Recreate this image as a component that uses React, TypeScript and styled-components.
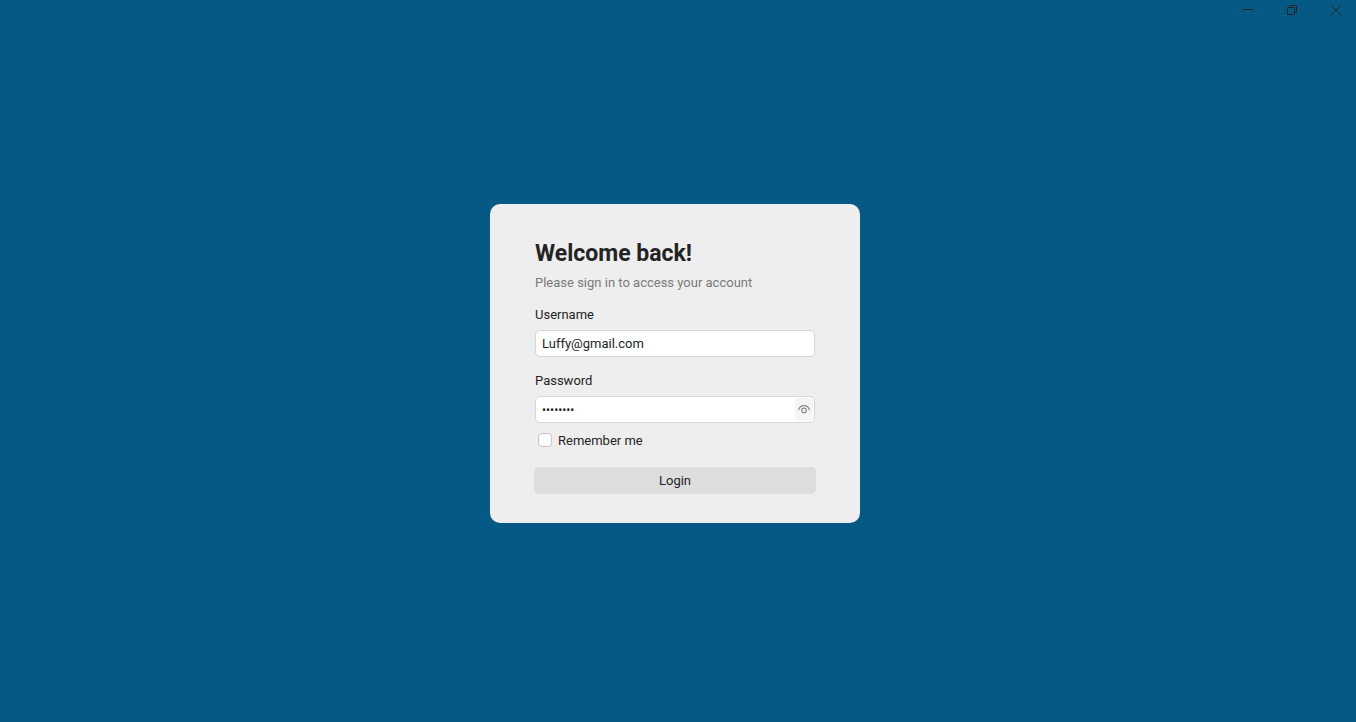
import React, { useState } from "react";
import styled, { createGlobalStyle } from "styled-components";

const GlobalStyle = createGlobalStyle`
  *, *::before, *::after { box-sizing: border-box; }
  body {
    margin: 0;
    background: #065985;
    color: #242424;
    font: 13px/16px Roboto, "Liberation Sans", sans-serif;
  }
  button, input { font: inherit; color: inherit; }
`;

const Page = styled.div`
  display: flex;
  flex-direction: column;
  min-height: 100vh;
`;

const TitleBar = styled.header`
  display: flex;
  justify-content: flex-end;
  gap: 4px;
  height: 20px;
`;

const WindowButton = styled.button`
  display: flex;
  align-items: center;
  justify-content: center;
  width: 40px;
  height: 20px;
  padding: 0;
  border: 0;
  background: transparent;
`;

const WindowIcon = styled.svg`
  width: 10px;
  height: 10px;
  fill: none;
  stroke: #242424;
`;

const Main = styled.main`
  display: flex;
  flex: 1;
  align-items: center;
  justify-content: center;
  padding: 0 6px 15px 0;
`;

const Card = styled.form`
  display: flex;
  flex-direction: column;
  width: 370px;
  max-width: 100%;
  padding: 34px 44px 29px;
  border-radius: 10px;
  background: #eeeeee;
`;

const Content = styled.div`
  display: flex;
  flex-direction: column;
  padding: 0 1px;
`;

const Title = styled.h1`
  margin: 0;
  font-size: 23px;
  line-height: 32px;
  font-weight: 700;
`;

const Subtitle = styled.p`
  margin: 5px 0 0;
  color: #7a7a7a;
`;

const Field = styled.div`
  display: flex;
  flex-direction: column;
  gap: 7px;
  margin-top: 16px;
`;

const InputFrame = styled.div`
  display: flex;
  align-items: center;
  height: 27px;
  padding-right: 1px;
  border: 1px solid #d5d5d5;
  border-radius: 5px;
  background: #ffffff;
`;

const TextInput = styled.input`
  flex: 1;
  min-width: 0;
  height: 25px;
  padding: 0 6px;
  border: 0;
  outline: 0;
  background: transparent;

  &[type="password"] { font-size: 12px; }
`;

const RevealButton = styled.button`
  display: flex;
  align-items: center;
  justify-content: center;
  width: 18px;
  height: 23px;
  padding: 0;
  border: 0;
  border-radius: 4px;
  background: #f5f5f5;
`;

const EyeIcon = styled.svg`
  width: 12px;
  height: 11px;
  fill: none;
  stroke: #8a8a8a;
  stroke-width: 1.2;
`;

const Remember = styled.label`
  display: flex;
  align-items: flex-start;
  align-self: flex-start;
  gap: 6px;
  margin: 10px 0 18px;
  padding-left: 3px;
`;

const CheckBox = styled.input`
  appearance: none;
  width: 14px;
  height: 14px;
  margin: 0;
  border: 1px solid #c6c6c6;
  border-radius: 4px;
  background: #ffffff;

  &:checked { background: #065985; }
`;

const LoginButton = styled.button`
  height: 27px;
  padding: 0;
  border: 0;
  border-radius: 5px;
  background: #dddddd;
`;

export default function App() {
  const [visible, setVisible] = useState(false);
  return (
    <Page>
      <GlobalStyle />
      <TitleBar>
        <WindowButton type="button" aria-label="Minimize">
          <WindowIcon viewBox="0 0 10 10"><path d="M0 4.5H10" /></WindowIcon>
        </WindowButton>
        <WindowButton type="button" aria-label="Restore">
          <WindowIcon viewBox="0 0 10 10">
            <path d="M.5 2.5H7.5V9.5H.5ZM2.5 2.5V.5H9.5V7.5H7.5" />
          </WindowIcon>
        </WindowButton>
        <WindowButton type="button" aria-label="Close">
          <WindowIcon viewBox="0 0 10 10"><path d="M0 0L10 10M10 0L0 10" /></WindowIcon>
        </WindowButton>
      </TitleBar>
      <Main>
        <Card onSubmit={(e: React.FormEvent) => e.preventDefault()}>
          <Content>
            <Title>Welcome back!</Title>
            <Subtitle>Please sign in to access your account</Subtitle>
            <Field>
              <label htmlFor="username">Username</label>
              <InputFrame>
                <TextInput id="username" type="text" defaultValue="Luffy@gmail.com" spellCheck={false} />
              </InputFrame>
            </Field>
            <Field>
              <label htmlFor="password">Password</label>
              <InputFrame>
                <TextInput id="password" type={visible ? "text" : "password"} defaultValue="password" />
                <RevealButton type="button" aria-label="Show password" onClick={() => setVisible(!visible)}>
                  <EyeIcon viewBox="0 0 12 11">
                    <path d="M.6 6C1.3 3.2 3.3 1.7 6 1.7S10.7 3.2 11.4 6" />
                    <circle cx="6" cy="6.4" r="2.3" />
                  </EyeIcon>
                </RevealButton>
              </InputFrame>
            </Field>
            <Remember>
              <CheckBox type="checkbox" />
              Remember me
            </Remember>
          </Content>
          <LoginButton type="submit">Login</LoginButton>
        </Card>
      </Main>
    </Page>
  );
}
